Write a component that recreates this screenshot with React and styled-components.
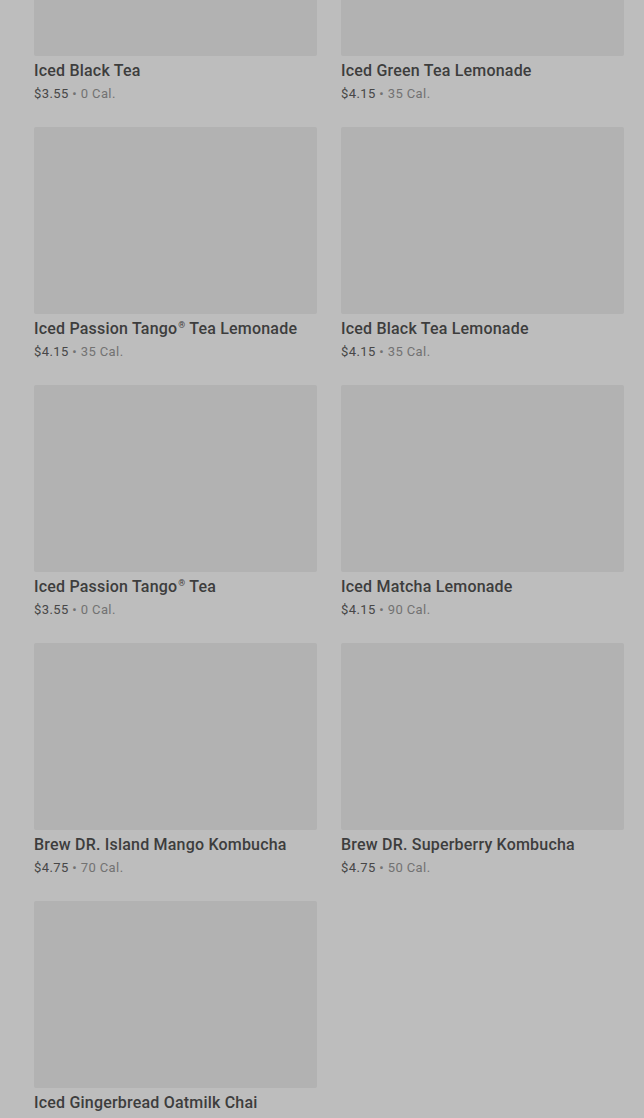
import React from 'react';
import styled, { createGlobalStyle } from 'styled-components';

const GlobalStyle = createGlobalStyle`
  html, body {
    margin: 0;
    padding: 0;
    background: #bdbdbd;
    overflow: hidden;
  }
  body {
    font-family: Roboto, "Liberation Sans", sans-serif;
  }
`;

const Page = styled.div`
  height: 1118px;
  overflow: hidden;
`;

const Grid = styled.div`
  display: grid;
  grid-template-columns: 283px 283px;
  column-gap: 24px;
  row-gap: 24px;
  padding: 0 20px 0 34px;
  margin-top: -131px;
`;

const Card = styled.div`
  display: flex;
  flex-direction: column;
`;

const Thumb = styled.div`
  height: 187px;
  background: #b2b2b2;
  border-radius: 2px;
  margin-bottom: 3px;
`;

const Title = styled.div`
  font-size: 16px;
  font-weight: 500;
  line-height: 24px;
  color: #3d3d3d;
  letter-spacing: 0.2px;
  white-space: nowrap;
`;

const Reg = styled.sup`
  font-size: 0.55em;
  line-height: 0;
  vertical-align: 0.7em;
  margin-left: 1px;
`;

const Meta = styled.div`
  margin-top: 2px;
  font-size: 13px;
  line-height: 18px;
  letter-spacing: 0.4px;
  color: #727272;
`;

const Price = styled.span`
  color: #474747;
`;

const drinks = [
  { name: 'Iced Black Tea', price: '$3.55', cal: '0 Cal.' },
  { name: 'Iced Green Tea Lemonade', price: '$4.15', cal: '35 Cal.' },
  { name: 'Iced Passion Tango', reg: true, rest: ' Tea Lemonade', price: '$4.15', cal: '35 Cal.' },
  { name: 'Iced Black Tea Lemonade', price: '$4.15', cal: '35 Cal.' },
  { name: 'Iced Passion Tango', reg: true, rest: ' Tea', price: '$3.55', cal: '0 Cal.' },
  { name: 'Iced Matcha Lemonade', price: '$4.15', cal: '90 Cal.' },
  { name: 'Brew DR. Island Mango Kombucha', price: '$4.75', cal: '70 Cal.' },
  { name: 'Brew DR. Superberry Kombucha', price: '$4.75', cal: '50 Cal.' },
  { name: 'Iced Gingerbread Oatmilk Chai', price: '$4.95', cal: '170 Cal.' },
];

const Drink = ({ drink }) => (
  <Card>
    <Thumb />
    <Title>
      {drink.name}
      {drink.reg && <Reg>®</Reg>}
      {drink.rest}
    </Title>
    <Meta>
      <Price>{drink.price}</Price> • {drink.cal}
    </Meta>
  </Card>
);

export default function App() {
  return (
    <Page>
      <GlobalStyle />
      <Grid>
        {drinks.map((d, i) => (
          <Drink key={i} drink={d} />
        ))}
      </Grid>
    </Page>
  );
}
